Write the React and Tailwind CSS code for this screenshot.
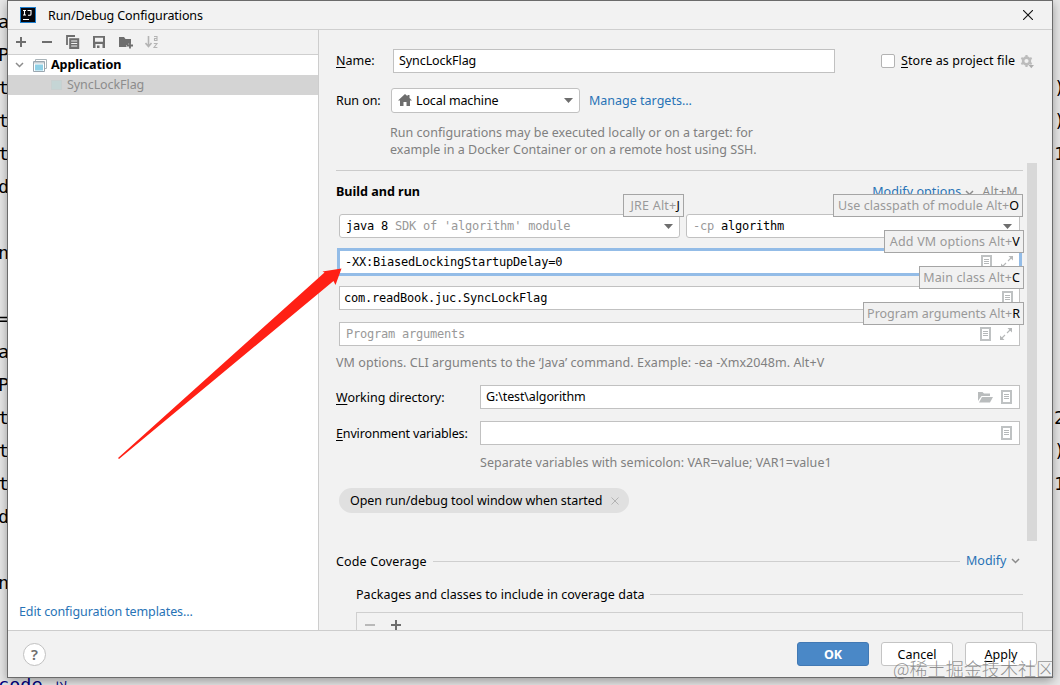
import React from 'react';

const leftCode = ['a', 'P', 't', 't', 't', 'd', '', 'n', '', '=', 'a', 'P', 't', 't', 't', 'd', '', 'n'];
const rightCode = ['', '', ')', ')', '1', '', '', '', '', '', '', '', '2', ')', '1', '', '', ''];

function Key({ first, rest, className = '' }) {
  return (
    <span className={className}>
      <span className="underline underline-offset-2">{first}</span>
      {rest}
    </span>
  );
}

function Plus({ className }) {
  return (
    <svg className={className} width="12" height="12" viewBox="0 0 12 12">
      <path d="M6 1v10M1 6h10" stroke="currentColor" strokeWidth="2" />
    </svg>
  );
}

function Minus({ className }) {
  return (
    <svg className={className} width="12" height="12" viewBox="0 0 12 12">
      <path d="M1 6h10" stroke="currentColor" strokeWidth="2" />
    </svg>
  );
}

function ListIcon() {
  return (
    <svg className="shrink-0" width="11" height="14" viewBox="0 0 11 14">
      <path d="M1 1h9v12H1z" fill="none" stroke="#bfc2c3" strokeWidth="2" />
      <path d="M3 4.500h5M3 6.500h5M3 8.500h5" stroke="#b5b8b9" strokeWidth="1" />
    </svg>
  );
}

function ExpandIcon() {
  return (
    <svg className="shrink-0" width="12" height="12" viewBox="0 0 12 12" stroke="#b6b8b9" fill="none" strokeWidth="1.100">
      <path d="M7 5l3.500-3.500M5 7l-3.500 3.500" />
      <path d="M7.500 0H12v4.500zM0 7.500V12h4.500z" fill="#b6b8b9" stroke="none" />
    </svg>
  );
}

function Chevron({ className }) {
  return (
    <svg className={className} width="9" height="6" viewBox="0 0 9 6">
      <path d="M1 1l3.500 3.500L8 1" fill="none" stroke="#8c8c8c" strokeWidth="1.500" />
    </svg>
  );
}

function Triangle() {
  return (
    <svg className="shrink-0" width="9" height="5" viewBox="0 0 9 5">
      <path d="M0 0h9L4.500 5z" fill="#6e6e6e" />
    </svg>
  );
}

function Hint({ text, letter, className }) {
  return (
    <div className={`absolute flex h-[23px] items-center justify-end border border-[#a5a5a5] bg-[#f1f1f1] pt-px pr-[3px] whitespace-pre text-[#999] ${className}`}>
      {text}
      <span className="text-black">{letter}</span>
    </div>
  );
}

function AppIcon() {
  return (
    <svg className="shrink-0" width="14" height="13" viewBox="0 0 14 13">
      <path d="M2.500 2V.5h11v9H12" fill="none" stroke="#a9b3b8" />
      <path d="M.5 2.500h11v10H.5z" fill="#fff" stroke="#9aa7b0" />
      <path d="M1 3h10v1.500H1z" fill="#c5cdd2" />
      <path d="M2 5.500h8v6H2z" fill="#8fd0e6" />
    </svg>
  );
}

function Toolbar() {
  return (
    <div className="flex h-[25px] shrink-0 items-center border-b border-[#cfcfcf] pl-[7px] text-[#6e6e6e]">
      <Plus className="mr-[14px]" />
      <Minus className="mr-[13px]" />
      <svg className="mr-[13px]" width="14" height="14" viewBox="0 0 14 14">
        <path d="M1 10V1h8" fill="none" stroke="currentColor" strokeWidth="1.800" />
        <path d="M3.200 3.200h10V14h-10z" fill="currentColor" />
        <path d="M5.200 6h6M5.200 8.500h6M5.200 11h6" stroke="#f2f2f2" />
      </svg>
      <svg className="mr-[14px]" width="12" height="12" viewBox="0 0 12 12">
        <path d="M0 0h12v12h-2.500V8h-7v4H0zM2 1.700v4h8v-4z" fill="currentColor" fillRule="evenodd" />
        <path d="M4 9.500h2.500V12H4z" fill="currentColor" />
      </svg>
      <svg className="mr-[11px]" width="15" height="13" viewBox="0 0 15 13">
        <path d="M0 1h5l1.500 2H12v4.500H9.500V9H7.500v2H0z" fill="currentColor" />
        <path d="M11 6.500v6M8 9.500h6" stroke="currentColor" strokeWidth="1.800" />
      </svg>
      <svg width="14" height="14" viewBox="0 0 14 14" className="text-[#b4b4b4]">
        <path d="M3.500 1v10M.5 8l3 3.500 3-3.500" fill="none" stroke="currentColor" strokeWidth="1.600" />
        <path d="M9 1.500h3v4H9.500v-2H12M8.800 8.500H12L9 12.500h3.400" fill="none" stroke="currentColor" strokeWidth="1.100" />
      </svg>
    </div>
  );
}

function Sidebar() {
  return (
    <div className="flex w-[311px] shrink-0 flex-col border-r border-[#cdcdcd]">
      <Toolbar />
      <div className="flex grow flex-col bg-white">
        <div className="flex h-5 items-center pl-[7px]">
          <Chevron className="mr-[9px]" />
          <AppIcon />
          <span className="ml-1 text-[12.600px] font-bold tracking-[-0.100px]">Application</span>
        </div>
        <div className="flex h-5 items-center bg-[#d4d4d4] pl-[43px]">
          <span className="h-[10px] w-[11px] border border-[#c9d0d0] bg-[#c5d5d5]" />
          <span className="ml-[5px] tracking-[-0.080px] text-[#8c8c8c]">SyncLockFlag</span>
        </div>
        <div className="mt-auto mb-2 pl-[11px] tracking-[-0.100px] text-[#2873b6]">Edit configuration templates...</div>
      </div>
    </div>
  );
}

function BuildAndRun() {
  return (
    <div className="relative h-[206px] shrink-0 pt-px">
      <div className="absolute top-0 left-0 h-px w-[687px] bg-[#cbcbcb]" />
      <div className="flex h-[43px] items-center pr-[8px]">
        <span className="grow text-[12.600px] font-bold tracking-[-0.020px]">Build and run</span>
        <span className="tracking-[0.080px] text-[#2873b6]">Modify options</span>
        <Chevron className="mr-[8px] ml-[4px]" />
        <span className="tracking-[0.300px] text-[#8a8a8a]">Alt+M</span>
      </div>
      <div className="flex gap-[6px] pl-[3px] font-[DejaVu_Sans_Mono,monospace] text-[12px] tracking-[-0.220px] whitespace-pre">
        <div className="flex h-6 w-[341px] items-center rounded-[3px] border border-[#c1c1c1] bg-white pr-[6px] pl-[6px]">
          java 8 <span className="grow text-[#999]">SDK of 'algorithm' module</span>
          <Triangle />
        </div>
        <div className="flex h-6 w-[334px] items-center rounded-[3px] border border-[#c1c1c1] bg-white pr-[7px] pl-[6px]">
          <span className="text-[#999]">-cp </span>
          <span className="grow">algorithm</span>
          <Triangle />
        </div>
      </div>
      <div className="mt-[10px] ml-px flex h-[28px] w-[685px] items-center border-[3px] border-[#93bce7] bg-white pr-[6px] pl-[5px] font-[DejaVu_Sans_Mono,monospace] text-[12px] tracking-[-0.220px]">
        <span className="grow">-XX:BiasedLockingStartupDelay=0</span>
        <ListIcon />
        <span className="w-[9px]" />
        <ExpandIcon />
      </div>
      <div className="mt-[10px] ml-[3px] flex h-6 w-[681px] items-center border border-[#c1c1c1] bg-white pr-[6px] pl-[4px] font-[DejaVu_Sans_Mono,monospace] text-[12px] tracking-[-0.220px]">
        <span className="grow">com.readBook.juc.SyncLockFlag</span>
        <ListIcon />
      </div>
      <div className="mt-3 ml-[3px] flex h-6 w-[681px] items-center border border-[#c1c1c1] bg-white pr-[7px] pl-[6px] font-[DejaVu_Sans_Mono,monospace] text-[12px] tracking-[-0.220px] text-[#999]">
        <span className="grow">Program arguments</span>
        <ListIcon />
        <span className="w-[9px]" />
        <ExpandIcon />
      </div>
      <div className="mt-[7px] h-5 leading-5 tracking-[0.070px] text-[#808080]">
        VM options. CLI arguments to the ‘Java’ command. Example: -ea -Xmx2048m. Alt+V
      </div>
      <Hint text="JRE Alt+" letter="J" className="top-[24px] left-[287px] w-[61px] tracking-[0.200px]" />
      <Hint text="Use classpath of module Alt+" letter="O" className="top-[24px] left-[497px] w-[190px] tracking-[0.040px]" />
      <Hint text="Add VM options Alt+" letter="V" className="top-[60px] left-[548px] w-[140px] tracking-[0.180px]" />
      <Hint text="Main class Alt+" letter="C" className="top-[96px] left-[583px] w-[105px] tracking-[0.120px]" />
      <Hint text="Program arguments Alt+" letter="R" className="top-[132px] left-[527px] w-[161px]" />
    </div>
  );
}

function Form() {
  return (
    <div className="flex h-[600px] w-[690px] shrink-0 flex-col">
      <div className="mt-[19px] flex h-6 w-[700px] shrink-0 items-center">
        <Key first="N" rest="ame:" className="w-[57px] shrink-0" />
        <div className="flex h-6 w-[442px] shrink-0 items-center border border-[#c1c1c1] bg-white pl-[5px] tracking-[-0.080px]">SyncLockFlag</div>
        <span className="ml-[46px] h-[14px] w-[14px] shrink-0 rounded-[2px] border border-[#b3b3b3] bg-white" />
        <Key first="S" rest="tore as project file" className="mt-px ml-[6px] w-[115px] shrink-0 tracking-[0.080px] whitespace-nowrap" />
        <svg className="ml-[4px] shrink-0" width="14" height="15" viewBox="0 0 14 15">
          <circle cx="6.500" cy="7" r="3.400" fill="none" stroke="#bcbcbc" strokeWidth="2.600" />
          <path d="M6.500 1v2.500M6.500 10.500V13M1.300 4l2.200 1.300M9.500 8.700l2.200 1.300M1.300 10l2.200-1.300M9.500 5.300L11.700 4" stroke="#bcbcbc" strokeWidth="2.200" />
          <path d="M8.500 11h5.500l-2.700 3.200z" fill="#adadad" />
        </svg>
      </div>
      <div className="mt-[15px] flex h-[25px] shrink-0 items-center">
        <span className="mt-0.5 w-[55px] tracking-[-0.080px]">Run on:</span>
        <div className="flex h-[25px] w-[189px] items-center rounded-[3px] border border-[#c1c1c1] bg-white pr-[6px] pl-[6px]">
          <svg className="-mt-0.5" width="14" height="12" viewBox="0 0 14 12">
            <path d="M7 0l2.500 2.200V1h2v3L14 6.500h-2V12H8.500V8h-3v4H2V6.500H0z" fill="#6e6e6e" />
          </svg>
          <span className="mt-0.5 ml-[4px] grow tracking-[-0.120px]">Local machine</span>
          <Triangle />
        </div>
        <span className="mt-0.5 ml-[9px] text-[#2873b6]">Manage targets...</span>
      </div>
      <div className="mt-[11px] h-[46px] shrink-0 pl-[54px] leading-[17px] tracking-[0.020px] text-[#808080]">
        Run configurations may be executed locally or on a target: for
        <br />
        example in a Docker Container or on a remote host using SSH.
      </div>
      <BuildAndRun />
      <div className="mt-[9px] flex h-6 shrink-0 items-center">
        <Key first="W" rest="orking directory:" className="mt-0.5 w-36" />
        <div className="flex h-6 w-[540px] items-center border border-[#c1c1c1] bg-white pr-[7px] pl-[5px] tracking-[-0.120px]">
          <span className="grow">G:\test\algorithm</span>
          <svg className="mr-[8px]" width="15" height="12" viewBox="0 0 15 12">
            <path d="M0 10V1h4.500L6 2.500h6V5H3.500z" fill="#b9bcbd" />
            <path d="M4 6h11l-3 5.500H1z" fill="#b9bcbd" />
          </svg>
          <ListIcon />
        </div>
      </div>
      <div className="mt-3 flex h-6 shrink-0 items-center">
        <Key first="E" rest="nvironment variables:" className="mt-0.5 w-36 tracking-[-0.140px]" />
        <div className="flex h-6 w-[540px] items-center justify-end border border-[#c1c1c1] bg-white pr-[7px]">
          <ListIcon />
        </div>
      </div>
      <div className="mt-[8px] h-5 shrink-0 pl-36 leading-5 tracking-[0.030px] text-[#808080]">
        Separate variables with semicolon: VAR=value; VAR1=value1
      </div>
      <div className="mt-[15px] ml-[3px] flex h-[25px] w-[290px] shrink-0 items-center rounded-full bg-[#e0e0e0] pl-[11px]">
        <span className="mt-0.5 tracking-[-0.050px]">Open run/debug tool window when started</span>
        <svg className="mr-[10px] ml-auto" width="8" height="8" viewBox="0 0 8 8">
          <path d="M.5.5l7 7M7.500.5l-7 7" stroke="#b3b3b3" />
        </svg>
      </div>
      <div className="mt-[38px] flex h-5 shrink-0 items-center">
        <span className="mt-0.5 w-[97px] tracking-[0.150px]">Code Coverage</span>
        <span className="h-px w-[527px] bg-[#cfcfcf]" />
        <span className="ml-[6px] text-[#2873b6]">Modify</span>
        <Chevron className="ml-[4px]" />
      </div>
      <div className="mt-[13px] flex h-5 shrink-0 items-center pl-5">
        <span className="mt-0.5 w-[294px] tracking-[0.040px] whitespace-nowrap">Packages and classes to include in coverage data</span>
        <span className="h-px w-[373px] bg-[#cfcfcf]" />
      </div>
      <div className="mt-[8px] ml-5 flex h-10 w-[667px] shrink-0 gap-[14px] border border-[#cfcfcf] pt-[6px] pl-[7px]">
        <Minus className="text-[#b9b9b9]" />
        <Plus className="text-[#6e6e6e]" />
      </div>
    </div>
  );
}

export default function App() {
  return (
    <div className="relative flex h-[685px] w-[1060px] justify-between overflow-hidden bg-[#e8e8e8] font-[Noto_Sans,sans-serif] text-[12.500px] text-black">
      <div className="ml-[-2px] w-3 pt-[5px] font-[DejaVu_Sans_Mono,monospace] text-[18.500px] leading-[33px]">
        {leftCode.map((c, i) => (
          <div key={i} className="h-[33px]">{c}</div>
        ))}
        <div className="mt-[67px] flex items-center gap-[12px] whitespace-nowrap text-[#000080]">
          <span>code</span>
          <span className="mt-1 font-[Noto_Sans_CJK_SC,sans-serif] text-[14px]">以</span>
        </div>
      </div>
      <div className="w-[6px] pt-[5px] font-[DejaVu_Sans_Mono,monospace] text-[18.500px] leading-[33px]">
        {rightCode.map((c, i) => (
          <div key={i} className="h-[33px]">{c}</div>
        ))}
      </div>

      <div className="absolute top-0 left-[7px] flex h-[678px] w-[1046px] flex-col border border-[#6b6b6b] bg-[#f2f2f2] shadow-[0_3px_10px_rgba(0,0,0,0.35)]">
        <div className="flex h-[29px] shrink-0 items-center border-b border-[#cfcfcf] pl-3">
          <svg width="16" height="16" viewBox="0 0 16 16">
            <path d="M0 0h16v16H0z" fill="#1c7fd0" />
            <path d="M1 1h14v14H1z" fill="#05060c" />
            <path d="M3 3.500h3M4.500 3.500v4.500M3 8h3M7.500 3.500H11v3.700q0 1-1.200 1H8M3 12.500h6" fill="none" stroke="#fff" strokeWidth="1.100" />
          </svg>
          <span className="mt-0.5 ml-3 tracking-[-0.110px]">Run/Debug Configurations</span>
          <svg className="mr-[19px] ml-auto" width="10" height="10" viewBox="0 0 10 10">
            <path d="M0 0l10 10M10 0L0 10" stroke="#111" strokeWidth="1.100" />
          </svg>
        </div>
        <div className="flex h-[600px] shrink-0 overflow-hidden">
          <Sidebar />
          <div className="flex pl-[17px]">
            <Form />
            <div className="mt-[133px] ml-px h-[378px] w-[10px] bg-[#d8d8d8]" />
          </div>
        </div>
        <div className="flex grow items-center border-t border-[#cdcdcd] pr-[15px] pl-[15px]">
          <span className="flex h-[23px] w-[23px] items-center justify-center rounded-full border border-[#c1c1c1] bg-white text-[15px] font-semibold text-[#6e6e6e]">?</span>
          <span className="ml-auto flex h-6 w-[72px] items-center justify-center rounded-[3px] border border-[#4279b4] bg-[#4a88c7] pt-0.5 font-bold text-white">OK</span>
          <span className="ml-3 flex h-6 w-[72px] items-center justify-center rounded-[3px] border border-[#c4c4c4] bg-white pt-0.5">Cancel</span>
          <span className="ml-3 flex h-6 w-[72px] items-center justify-center rounded-[3px] border border-[#c4c4c4] bg-white pt-0.5">
            <Key first="A" rest="pply" />
          </span>
        </div>
      </div>

      <svg className="absolute top-[260px] left-[110px]" width="240" height="205" viewBox="110 260 240 205">
        <path d="M118 458L324.500 272.500 322.500 271.500 341.500 268.500 335.500 285 333.500 281 119 459z" fill="#ff2015" />
      </svg>
      <div className="absolute top-[656px] left-[893px] font-[Noto_Sans_CJK_SC,sans-serif] text-[18.100px] leading-6 font-light whitespace-nowrap text-[#777]/80">@稀土掘金技术社区</div>
    </div>
  );
}
